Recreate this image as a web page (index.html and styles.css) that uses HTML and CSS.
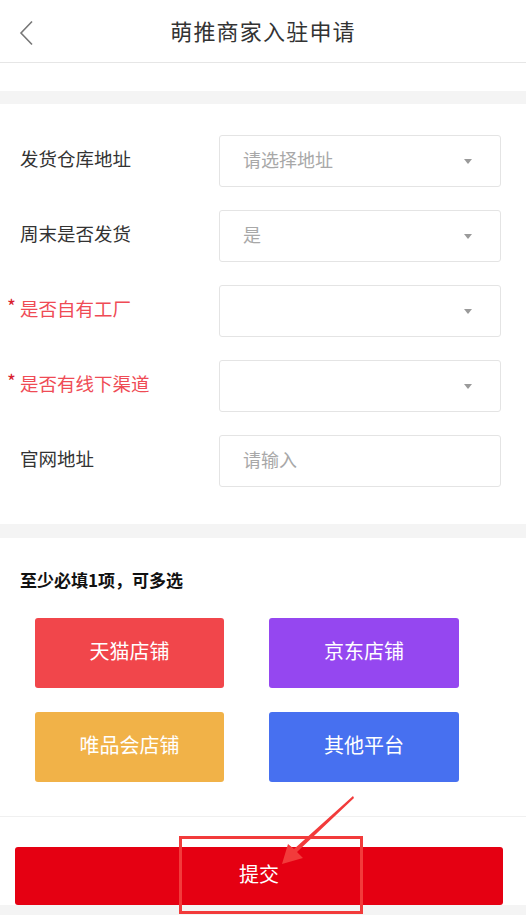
FILE: index.html
```html
<!DOCTYPE html>
<html lang="zh-CN">
<head>
<meta charset="utf-8">
<title>萌推商家入驻申请</title>
<link rel="stylesheet" href="styles.css">
</head>
<body>
<div class="page">
  <header class="header">
    <svg class="back" width="16" height="26" viewBox="0 0 16 26"><path d="M13 1.5 L2 13 L13 24.5" fill="none" stroke="#777" stroke-width="1.6"/></svg>
    <h1 class="title">萌推商家入驻申请</h1>
  </header>
  <div class="spacer"></div>
  <div class="band"></div>
  <section class="form">
    <div class="row">
      <div class="label">发货仓库地址</div>
      <div class="field"><span class="ph">请选择地址</span><i class="caret"></i></div>
    </div>
    <div class="row">
      <div class="label">周末是否发货</div>
      <div class="field"><span class="ph">是</span><i class="caret"></i></div>
    </div>
    <div class="row">
      <div class="label req"><span class="star">*</span>是否自有工厂</div>
      <div class="field"><span class="ph"></span><i class="caret"></i></div>
    </div>
    <div class="row">
      <div class="label req"><span class="star">*</span>是否有线下渠道</div>
      <div class="field"><span class="ph"></span><i class="caret"></i></div>
    </div>
    <div class="row">
      <div class="label">官网地址</div>
      <div class="field"><span class="ph">请输入</span></div>
    </div>
  </section>
  <div class="band band2"></div>
  <section class="shops">
    <h2 class="shops-title">至少必填1项，可多选</h2>
    <div class="grid">
      <div class="shop tmall">天猫店铺</div>
      <div class="shop jd">京东店铺</div>
      <div class="shop vip">唯品会店铺</div>
      <div class="shop other">其他平台</div>
    </div>
  </section>
  <footer class="footer">
    <div class="submit">提交</div>
  </footer>
  <svg class="annot" width="526" height="915" viewBox="0 0 526 915">
    <rect x="180.5" y="837.5" width="181" height="75" fill="none" stroke="#f23b3b" stroke-width="3"/>
    <path d="M353 796 L354 798 L297 852 L303 858 L282 864 L288 844 L294 849 Z" fill="#f23b3b"/>
  </svg>
</div>
</body>
</html>
```
FILE: styles.css
```css
* { box-sizing: border-box; }
html, body { margin: 0; padding: 0; }
body {
  background: #f4f4f4;
  font-family: "Noto Sans CJK SC", "Noto Sans", sans-serif;
  color: #333;
}
.page {
  position: relative;
  width: 526px;
  min-height: 915px;
  background: #f4f4f4;
}
.header {
  height: 63px;
  background: #fff;
  border-bottom: 1px solid #e6e6e6;
  display: flex;
  align-items: center;
  justify-content: center;
  position: relative;
}
.back {
  position: absolute;
  left: 19px;
  top: 20px;
}
.title {
  margin: 0 0 2px 0;
  font-size: 22px;
  font-weight: 400;
  color: #333;
  letter-spacing: 1.2px;
}
.spacer { height: 28px; background: #fff; }
.band { height: 13px; background: #f4f4f4; }
.band2 { height: 14px; }
.form {
  background: #fff;
  padding: 31px 25px 37px 0;
  display: flex;
  flex-direction: column;
  gap: 23px;
}
.row {
  display: flex;
  align-items: center;
  height: 52px;
}
.label {
  width: 219px;
  padding-left: 20px;
  font-size: 18.5px;
  color: #333;
  margin-top: -6px;
}
.label.req { color: #ef4b55; position: relative; }
.star {
  position: absolute;
  left: 7px;
  top: -3px;
  color: #d8202c;
  font-size: 19px;
}
.field {
  flex: 1;
  height: 52px;
  border: 1px solid #e4e4e4;
  border-radius: 3px;
  display: flex;
  align-items: center;
  padding-left: 23px;
  padding-right: 28px;
  background: #fff;
}
.ph {
  flex: 1;
  font-size: 18px;
  color: #a8a8a8;
  margin-top: -5px;
}
.caret {
  width: 0;
  height: 0;
  border-left: 4px solid transparent;
  border-right: 4px solid transparent;
  border-top: 5px solid #9a9a9a;
}
.shops {
  background: #fff;
  padding: 30px 0 34px;
  border-bottom: 1px solid #f0f0f0;
}
.shops-title {
  margin: 0 0 26px 20px;
  font-size: 17px;
  line-height: 24px;
  font-weight: 700;
  color: #111;
}
.grid {
  display: grid;
  grid-template-columns: 189px 190px;
  column-gap: 45px;
  row-gap: 24px;
  padding-left: 35px;
}
.shop {
  height: 70px;
  border-radius: 3px;
  color: #fff;
  font-size: 20px;
  display: flex;
  align-items: center;
  justify-content: center;
  padding-bottom: 5px;
}
.tmall { background: #f1464b; }
.jd { background: #9547f0; }
.vip { background: #f1b248; }
.other { background: #4770f0; }
.footer {
  background: #fff;
  padding: 30px 23px 0 15px;
}
.submit {
  height: 58px;
  background: #e50012;
  border-radius: 3px;
  color: #fff;
  font-size: 20px;
  display: flex;
  align-items: center;
  justify-content: center;
  padding-bottom: 5px;
}
.annot {
  position: absolute;
  left: 0;
  top: 0;
  pointer-events: none;
}
```
